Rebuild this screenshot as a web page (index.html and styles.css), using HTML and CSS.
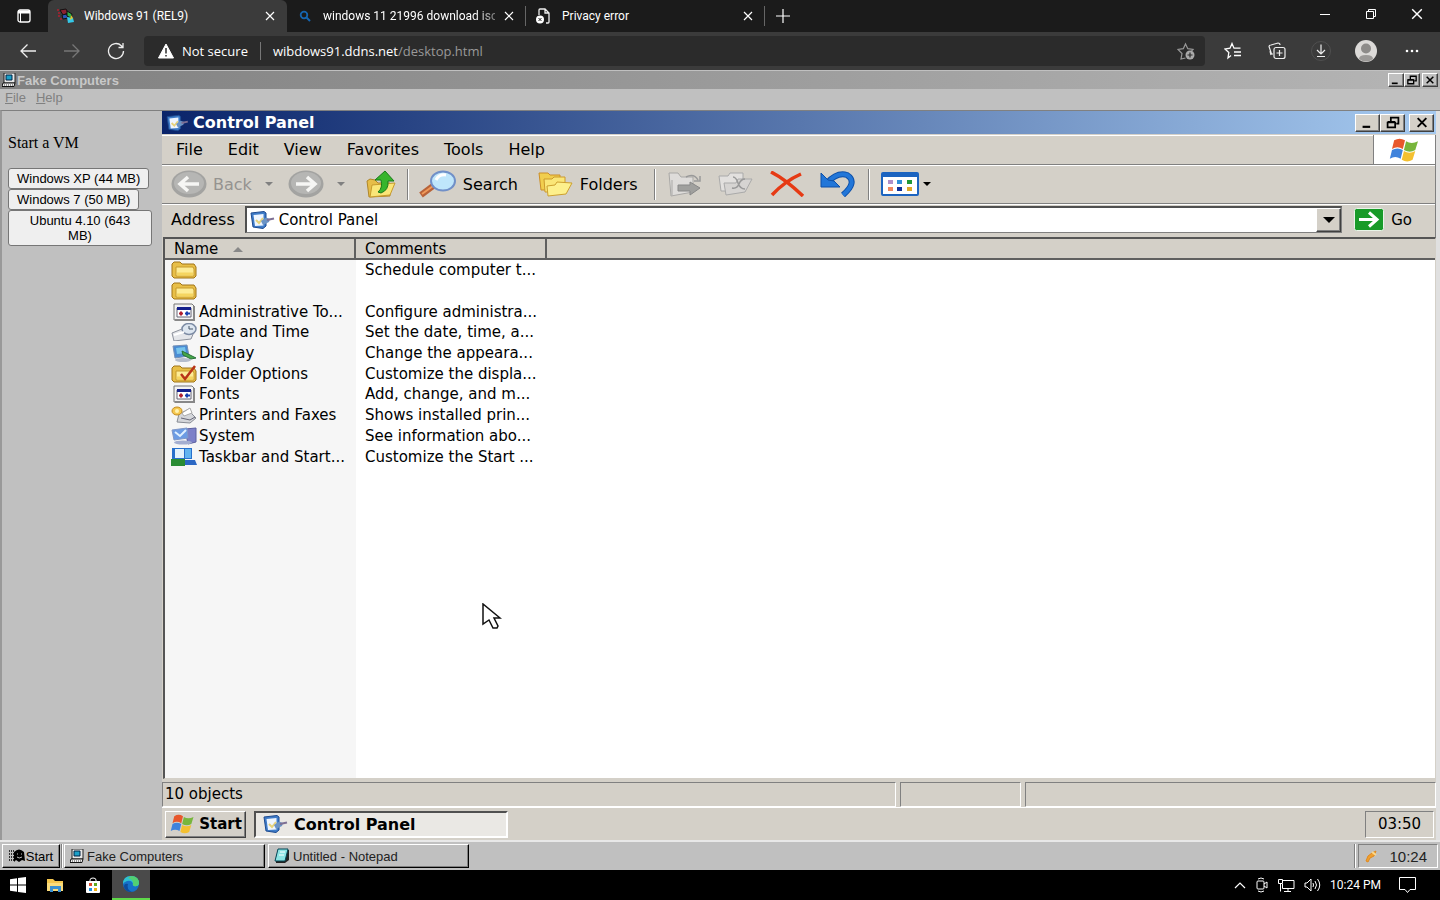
FILE: index.html
```html
<!DOCTYPE html>
<html lang="en">
<head>
  <meta charset="UTF-8">
  <meta name="viewport" content="width=device-width, initial-scale=1.0">
  <title>Wibdows 91 (REL9)</title>
  <link rel="stylesheet" href="styles.css">
</head>
<body>
  <!-- Shared icons -->
  <svg class="defs" width="0" height="0" aria-hidden="true">
    <symbol id="i-close" viewBox="0 0 10 10"><path d="M1 1l8 8M9 1l-8 8" fill="none" stroke="currentColor" stroke-width="1.2"/></symbol>
    <symbol id="i-pc" viewBox="0 0 14 14">
      <path d="M2 0h11v10H2z" fill="#e8e8e8" stroke="#222"/><path d="M4 2h6v5H4z" fill="#1ba0c8" stroke="#024"/>
      <path d="M1 10h12l-1 3.5H0z" fill="#f4f4f4" stroke="#111"/><path d="M2 12h9" stroke="#333" stroke-dasharray="1 1"/>
    </symbol>
    <symbol id="i-panel" viewBox="0 0 26 20">
      <path d="M2 3l13-1.500 2 1.500v13l-3 2.500L4 17z" fill="#3f7cc8" stroke="#1d4a90"/>
      <path d="M4.500 5l10-1v11.500l-8.500.5z" fill="#eef5ff"/>
      <path d="M7 10l3 3 4-5" fill="none" stroke="#e6d27a" stroke-width="2"/>
      <path d="M12 11l5-3.500 4 1.500-1 3-6 3z" fill="#6b93c4"/><path d="M18 10l7-1.500" stroke="#7d6f94" stroke-width="2"/>
    </symbol>
    <symbol id="i-flag" viewBox="0 0 32 24">
      <path d="M6 3q5-3 10 0l-2 8q-5-3-10 0z" fill="#e8582c"/><path d="M17 4q5 3 11 0l-2.500 8q-5 3-10.500 0z" fill="#78b63c"/>
      <path d="M4 12q5-3 10 0l-2 8q-5-3-10 0z" fill="#3f83dc"/><path d="M15 13q5 3 10.500 0l-2.500 8q-5 3-10 0z" fill="#f4c030"/>
    </symbol>
    <symbol id="i-folder" viewBox="0 0 26 18">
      <path d="M1 3l2-2h6l2 2h12l2 3v9l-2 2H3l-2-2z" fill="#e8bf48" stroke="#a07418"/>
      <path d="M5 6h17l1 2v7H5z" fill="#fdec96" stroke="#c79a2c"/><path d="M6 13h16" stroke="#f5d560" stroke-width="3"/>
    </symbol>
    <symbol id="i-fontfile" viewBox="0 0 26 18">
      <path d="M3 1h18l2 2v14H3z" fill="#f2f2f2" stroke="#777"/><path d="M23 3v14H4" fill="none" stroke="#888" stroke-width="2"/>
      <path d="M6 5h14v9H6z" fill="#fff" stroke="#667"/><path d="M6 4h14v3H6z" fill="#14208c"/>
      <path d="M8 10.500h4M10 8.500v4" stroke="#b02030" stroke-width="2"/><path d="M14 10.500h5M16 8.500v4" stroke="#1840b0" stroke-width="2"/>
    </symbol>
    <symbol id="i-min" viewBox="0 0 14 12"><path d="M2 10h7" stroke="#000" stroke-width="2"/></symbol>
    <symbol id="i-restore" viewBox="0 0 14 12"><path d="M5 5V1.500h7V7h-2M5 1.500h7M2 6h7v4.500H2zM2 5.500h7" fill="none" stroke="#000" stroke-width="1.600"/></symbol>
    <symbol id="i-x" viewBox="0 0 14 12"><path d="M3 2l8 8M11 2l-8 8" stroke="#000" stroke-width="1.800"/></symbol>
    <symbol id="i-down" viewBox="0 0 10 5"><path d="M0 0h10L5 5z" fill="currentColor"/></symbol>
  </svg>

  <!-- Browser tabs -->
  <header class="tabs">
    <button class="tab-actions" aria-label="Tab actions">
      <svg width="14" height="14" viewBox="0 0 14 14"><rect x="1" y="1" width="12" height="12" rx="2" fill="none" stroke="#fff" stroke-width="1.300"/><path d="M1 3h12" stroke="#fff" stroke-width="3"/><path d="M3.500 4v9" stroke="#fff"/></svg>
    </button>
    <div class="tab active">
      <svg width="18" height="16" viewBox="0 0 18 16"><path d="M0 2h3M1 5h3M1 8h3M3 11h2" stroke="#b02030" stroke-width="1.500" stroke-dasharray="2 1"/><path d="M3 2l6-1 2 4-5 2z" fill="#8c2030" stroke="#111"/><path d="M5 7l5-1 1 4-5 1z" fill="#2858b8" stroke="#111"/><path d="M10 3l5 3-1 4-4-2z" fill="#30b048" stroke="#111"/><path d="M10 9l6 1 1 4-6 1z" fill="#35c8e8"/><path d="M14 7l2 3-3 2z" fill="#e0c830"/></svg>
      <span class="tab-title">Wibdows 91 (REL9)</span>
      <button class="tab-close" aria-label="Close tab"><svg width="10" height="10"><use href="#i-close"/></svg></button>
    </div>
    <div class="tab">
      <svg width="18" height="16" viewBox="0 0 18 16"><circle cx="8" cy="7" r="3.300" fill="none" stroke="#1565b0" stroke-width="1.800"/><path d="M10.500 9.500l3.500 3.500" stroke="#1565b0" stroke-width="2"/></svg>
      <span class="tab-title fade">windows 11 21996 download iso</span>
      <button class="tab-close" aria-label="Close tab"><svg width="10" height="10"><use href="#i-close"/></svg></button>
    </div>
    <div class="tab">
      <svg width="18" height="16" viewBox="0 0 18 16"><path d="M4 7V2q0-1 1-1h5l4 4v9q0 1-1 1h-2M10 1v4h4" fill="none" stroke="#eee" stroke-width="1.300"/><circle cx="5" cy="11.500" r="4" fill="#fff"/><path d="M3.500 10l3 3M6.500 10l-3 3" stroke="#222"/></svg>
      <span class="tab-title">Privacy error</span>
      <button class="tab-close" aria-label="Close tab"><svg width="10" height="10"><use href="#i-close"/></svg></button>
    </div>
    <button class="new-tab" aria-label="New tab"><svg width="14" height="14" viewBox="0 0 14 14"><path d="M7 0v14M0 7h14" stroke="#fff" stroke-width="1.200"/></svg></button>
    <div class="window-controls">
      <button aria-label="Minimize"><svg width="10" height="10"><path d="M0 5.500h10" stroke="#fff"/></svg></button>
      <button aria-label="Restore"><svg width="10" height="10" viewBox="0 0 10 10"><path d="M.5 2.500h7v7h-7zM2.500 2.500v-2h7v7h-2" fill="none" stroke="#fff"/></svg></button>
      <button aria-label="Close"><svg width="12" height="12"><use href="#i-close"/></svg></button>
    </div>
  </header>

  <!-- Browser toolbar -->
  <div class="browser-bar">
    <button aria-label="Back"><svg width="18" height="16" viewBox="0 0 18 16"><path d="M17 8H2M8.500 1.500L2 8l6.500 6.500" fill="none" stroke="#eee" stroke-width="1.300"/></svg></button>
    <button aria-label="Forward"><svg width="18" height="16" viewBox="0 0 18 16"><path d="M1 8h15M9.500 1.500L16 8l-6.500 6.500" fill="none" stroke="#777" stroke-width="1.300"/></svg></button>
    <button aria-label="Refresh"><svg width="18" height="18" viewBox="0 0 18 18"><path d="M16.500 9A7.500 7.500 0 1 1 14.300 3.700L16 5.500M16 1v4.500h-4.500" fill="none" stroke="#eee" stroke-width="1.300"/></svg></button>
    <div class="omnibox">
      <svg width="18" height="16" viewBox="0 0 18 16"><path d="M9 1l7.500 14h-15z" fill="#fff" stroke="#fff" stroke-linejoin="round"/><path d="M9 5v5.500M9 12v1.500" stroke="#2b2b2b" stroke-width="1.500"/></svg>
      <span class="not-secure">Not secure</span>
      <a class="url" href="#">wibdows91.ddns.net<span>/desktop.html</span></a>
      <button aria-label="Add to favorites"><svg width="18" height="18" viewBox="0 0 18 18"><path d="M8.500 16L4 17l1-5.500L1 7.500l5.300-.8L8.500 2l2.300 4.700 5.200.8-1.500 1.500" fill="none" stroke="#999" stroke-width="1.200"/><circle cx="13" cy="13" r="4.500" fill="#aaa"/><path d="M13 10.500v5M10.500 13h5" stroke="#2b2b2b" stroke-width="1.200"/></svg></button>
    </div>
    <button aria-label="Favorites"><svg width="18" height="18" viewBox="0 0 18 18"><path d="M7 13.500L4 16l.8-5.500L1 7l5-.8L8 1.500l2 4.700h6.500M10 10h7M10 13.500h7" fill="none" stroke="#fff" stroke-width="1.300"/></svg></button>
    <button aria-label="Collections"><svg width="18" height="18" viewBox="0 0 18 18"><path d="M5 12H3.500L1 4.500Q1 3 3 3l7-2q2 0 2 2M3 13l-1-4" fill="none" stroke="#eee" stroke-width="1.200"/><rect x="6" y="5.500" width="11" height="11" rx="2" fill="#3b3b3b" stroke="#eee" stroke-width="1.200"/><path d="M11.500 8v6M8.500 11h6" stroke="#eee" stroke-width="1.200"/></svg></button>
    <button aria-label="Downloads"><svg width="20" height="20" viewBox="0 0 20 20"><circle cx="10" cy="10" r="9.500" fill="none" stroke="#505050"/><path d="M10 3.500v9M6 9l4 4 4-4M6 15.500h8" fill="none" stroke="#eee" stroke-width="1.200"/></svg></button>
    <button class="wide" aria-label="Profile"><svg width="22" height="22" viewBox="0 0 22 22"><circle cx="11" cy="11" r="11" fill="#dcdad8"/><circle cx="11" cy="8.500" r="5" fill="#8d8b89"/><path d="M4 19q0-4 7-4t7 4q-7 5-14 0z" fill="#9b9997"/></svg></button>
    <button class="wide" aria-label="Settings and more"><svg width="14" height="4" viewBox="0 0 14 4"><circle cx="2" cy="2" r="1.300" fill="#fff"/><circle cx="7" cy="2" r="1.300" fill="#fff"/><circle cx="12" cy="2" r="1.300" fill="#fff"/></svg></button>
  </div>

  <!-- Wibdows 91 desktop -->
  <main class="desktop">
    <div class="app-title">
      <svg width="14" height="14"><use href="#i-pc"/></svg>
      <span>Fake Computers</span>
      <div class="win-buttons small">
        <button aria-label="Minimize"><svg width="12" height="10"><use href="#i-min"/></svg></button>
        <button aria-label="Restore"><svg width="12" height="10"><use href="#i-restore"/></svg></button>
        <button aria-label="Close"><svg width="12" height="10"><use href="#i-x"/></svg></button>
      </div>
    </div>
    <nav class="app-menu"><a href="#"><u>F</u>ile</a><a href="#"><u>H</u>elp</a></nav>

    <div class="app-body">
      <aside class="sidebar">
        <p>Start a VM</p>
        <button>Windows XP (44 MB)</button>
        <button>Windows 7 (50 MB)</button>
        <button>Ubuntu 4.10 (643 MB)</button>
      </aside>

      <section class="vm">
        <div class="vm-title">
          <svg width="24" height="18"><use href="#i-panel"/></svg>
          <h1>Control Panel</h1>
          <div class="win-buttons">
            <button aria-label="Minimize"><svg width="16" height="13"><use href="#i-min"/></svg></button>
            <button aria-label="Restore"><svg width="16" height="13"><use href="#i-restore"/></svg></button>
            <button aria-label="Close"><svg width="16" height="13"><use href="#i-x"/></svg></button>
          </div>
        </div>

        <div class="explorer">
          <nav class="vm-menu">
            <a href="#">File</a><a href="#">Edit</a><a href="#">View</a><a href="#">Favorites</a><a href="#">Tools</a><a href="#">Help</a>
            <span class="brand"><svg width="36" height="26"><use href="#i-flag"/></svg></span>
          </nav>

          <div class="toolbar">
            <button class="back" disabled>
              <svg width="36" height="28" viewBox="0 0 36 28"><ellipse cx="18" cy="14" rx="17.500" ry="13.500" fill="#a3a3a1"/><ellipse cx="18" cy="13" rx="15" ry="11" fill="#b6b6b4"/><path d="M28 14H10M17 7l-8 7 8 7" fill="none" stroke="#f6f6f4" stroke-width="3.500"/></svg>
              Back
            </button>
            <svg class="arrow" width="8" height="4"><use href="#i-down"/></svg>
            <button class="forward" disabled aria-label="Forward">
              <svg width="36" height="28" viewBox="0 0 36 28"><ellipse cx="18" cy="14" rx="17.500" ry="13.500" fill="#a3a3a1"/><ellipse cx="18" cy="13" rx="15" ry="11" fill="#b6b6b4"/><path d="M8 14h18M19 7l8 7-8 7" fill="none" stroke="#f6f6f4" stroke-width="3.500"/></svg>
            </button>
            <svg class="arrow" width="8" height="4"><use href="#i-down"/></svg>
            <button class="up" aria-label="Up">
              <svg width="32" height="28" viewBox="0 0 32 28"><path d="M2 11l3-2 5 1 3 3h12v13l-21 1z" fill="#e6bd48" stroke="#b0862a"/><path d="M7 15l23-2-5 12-20 2z" fill="#fae678" stroke="#c79a2c"/><path d="M16 23q8-3 7-12h6L20 1 10 10h6q2 8-3 12z" fill="#37b52c" stroke="#1a7a18"/></svg>
            </button>
            <span class="divider"></span>
            <button class="search">
              <svg width="38" height="28" viewBox="0 0 38 28"><path d="M2 25l12-9" stroke="#b86238" stroke-width="6"/><path d="M3 24l11-8" stroke="#f09a5a" stroke-width="2"/><ellipse cx="24" cy="11" rx="12" ry="9.500" fill="#bfe6fb" stroke="#7190c8" stroke-width="2"/><path d="M17 10q3-6 10-5" fill="none" stroke="#fff" stroke-width="3"/></svg>
              Search
            </button>
            <button class="folders">
              <svg width="36" height="26" viewBox="0 0 36 26"><path d="M1 2h9l2 2h10v15H3z" fill="#f1ce4e" stroke="#cc8f28"/><path d="M6 8h8l2-2h11v15H7z" fill="#fae678" stroke="#cc9a2c"/><path d="M9 15l8-1 2-3 15 1-6 11-18 2z" fill="#fdf08c" stroke="#cda030"/></svg>
              Folders
            </button>
            <span class="divider"></span>
            <button disabled aria-label="Move to">
              <svg width="36" height="26" viewBox="0 0 36 26"><path d="M2 2h9l3 4h12v15l-22 4zM5 24V9" fill="#dedcda" stroke="#a9a8a6"/><path d="M19 6q8-4 12 3M33 5v5h-6" fill="none" stroke="#999" stroke-width="1.500"/><path d="M11 14h12v-3l10 6-10 7v-4H11z" fill="#a0a09e" stroke="#888"/></svg>
            </button>
            <button disabled aria-label="Copy to">
              <svg width="36" height="26" viewBox="0 0 36 26"><path d="M1 5h9l2-3h13v18H3z" fill="#e2e0de" stroke="#aaa"/><path d="M6 12h12l2-4h14l-7 13-19 3z" fill="#d6d4d2" stroke="#aaa"/><path d="M15 6q3 0 5 6t7 6M14 17q5 1 7-4t6-5" fill="none" stroke="#999" stroke-width="1.500"/></svg>
            </button>
            <button class="delete" aria-label="Delete">
              <svg width="36" height="26" viewBox="0 0 36 26"><path d="M2 1Q16 8 34 25M32 3Q16 10 3 24" fill="none" stroke="#e63a14" stroke-width="3.500"/></svg>
            </button>
            <button class="undo" aria-label="Undo">
              <svg width="36" height="26" viewBox="0 0 36 26"><path d="M7 12Q17 1 27 4q11 7-4 20" fill="none" stroke="#0d4fa8" stroke-width="6"/><path d="M7 12Q17 1 27 4q11 7-4 20" fill="none" stroke="#2276d8" stroke-width="4"/><path d="M1 2v14h19l-6-6-6-1z" fill="#2276d8" stroke="#0d4fa8"/></svg>
            </button>
            <span class="divider"></span>
            <button class="views" aria-label="Views">
              <svg width="38" height="24" viewBox="0 0 38 24"><rect x="1" y="1" width="36" height="22" rx="1" fill="#fff" stroke="#1c64c0" stroke-width="2"/><path d="M1 3h36" stroke="#1c64c0" stroke-width="4"/><path d="M7 8h5v4H7z" fill="#b090c8"/><path d="M16 8h5v4h-5z" fill="#3090d8"/><path d="M26 8h5v4h-5z" fill="#209838"/><path d="M7 15h5v4H7z" fill="#f08860"/><path d="M16 15h5v4h-5z" fill="#103098"/><path d="M26 15h5v4h-5z" fill="#e0a828"/></svg>
              <svg width="8" height="4"><use href="#i-down"/></svg>
            </button>
          </div>

          <form class="address">
            <label for="address">Address</label>
            <div class="address-box">
              <svg width="26" height="20"><use href="#i-panel"/></svg>
              <input id="address" type="text" value="Control Panel">
              <button type="button" aria-label="Show addresses"><svg width="12" height="6"><use href="#i-down"/></svg></button>
            </div>
            <button class="go" type="button">
              <svg width="30" height="23" viewBox="0 0 30 23"><rect x=".5" y=".5" width="29" height="22" rx="2" fill="#189a28" stroke="#e8f4e8"/><path d="M5 11.500h18M15 4.500l8 7-8 7" fill="none" stroke="#fff" stroke-width="3"/></svg>
              Go
            </button>
          </form>

          <div class="files">
            <table>
              <thead>
                <tr><th class="col">Name <svg width="10" height="5" viewBox="0 0 10 5"><path d="M5 0l5 5H0z" fill="#888"/></svg></th><th class="col">Comments</th><th></th></tr>
              </thead>
              <tbody>
                <tr><td><svg width="26" height="18"><use href="#i-folder"/></svg></td><td>Schedule computer t...</td><td></td></tr>
                <tr><td><svg width="26" height="18"><use href="#i-folder"/></svg></td><td></td><td></td></tr>
                <tr><td><svg width="26" height="18"><use href="#i-fontfile"/></svg>Administrative To...</td><td>Configure administra...</td><td></td></tr>
                <tr><td><svg width="26" height="18" viewBox="0 0 26 18"><path d="M1 10l10-4 12 3-3 7-17 2z" fill="#e4e6ea" stroke="#8c919c"/><ellipse cx="18" cy="6" rx="7" ry="5.500" fill="#dde6f0" stroke="#7c8ba4" stroke-width="1.500"/><path d="M18 3v3h4" fill="none" stroke="#456"/><path d="M3 12l10-3" stroke="#fff" stroke-width="2"/></svg>Date and Time</td><td>Set the date, time, a...</td><td></td></tr>
                <tr><td><svg width="26" height="18" viewBox="0 0 26 18"><path d="M2 2l14-1 2 11-14 2z" fill="#4a8cd4" stroke="#7790b4"/><path d="M5 4l9-1 1 6-9 1z" fill="#78c4ec"/><ellipse cx="12" cy="16" rx="8" ry="2" fill="#b4bccc"/><path d="M11 7l14 7-5 1-8-4z" fill="#46a848" stroke="#287038"/></svg>Display</td><td>Change the appeara...</td><td></td></tr>
                <tr><td><svg width="26" height="18" viewBox="0 0 26 18"><use href="#i-folder"/><path d="M10 9l4 5 10-13" fill="none" stroke="#b83418" stroke-width="2.500"/></svg>Folder Options</td><td>Customize the displa...</td><td></td></tr>
                <tr><td><svg width="26" height="18"><use href="#i-fontfile"/></svg>Fonts</td><td>Add, change, and m...</td><td></td></tr>
                <tr><td><svg width="26" height="18" viewBox="0 0 26 18"><path d="M8 8l10-5 3 5 4 4-6 5-13-1z" fill="#d4d6da" stroke="#888c94"/><path d="M11 7l8-5 2 5-8 3z" fill="#fff" stroke="#aaa"/><path d="M10 12l9 2 5-3" fill="none" stroke="#667"/><ellipse cx="6" cy="5" rx="5" ry="4" fill="#f6c850" stroke="#c48c20"/><circle cx="6" cy="5" r="2" fill="#fff3b0"/></svg>Printers and Faxes</td><td>Shows installed prin...</td><td></td></tr>
                <tr><td><svg width="26" height="18" viewBox="0 0 26 18"><path d="M14 2l11-1v14l-8 2z" fill="#7c80c8" stroke="#5c60a0"/><path d="M1 3l15-2 1 10-14 2z" fill="#6c9ce4" stroke="#8098c8"/><path d="M4 5l5 4 6-6" fill="none" stroke="#e0f0ff" stroke-width="2"/><ellipse cx="12" cy="15.500" rx="9" ry="2" fill="#a4aed0"/></svg>System</td><td>See information abo...</td><td></td></tr>
                <tr><td><svg width="26" height="18" viewBox="0 0 26 18"><path d="M1 0h20v11H1z" fill="#2870cc"/><path d="M4 1h9v9H4z" fill="#e4f2fc"/><path d="M14 1h6v9h-6z" fill="#62b4f0"/><path d="M0 11h14v7H0z" fill="#2a8c34"/><path d="M14 12h10l2 5H14z" fill="#2c68c4"/></svg>Taskbar and Start...</td><td>Customize the Start ...</td><td></td></tr>
              </tbody>
            </table>
            <svg class="cursor" width="20" height="28" viewBox="0 0 20 28"><path d="M1 1v20l6-4 4 8h4l1-2-4-8h6z" fill="#fff" stroke="#111" stroke-width="1.500"/></svg>
          </div>

          <div class="status"><span>10 objects</span><span></span><span></span></div>
        </div>

        <div class="vm-taskbar">
          <button class="vm-start"><svg width="28" height="22"><use href="#i-flag"/></svg>Start</button>
          <button class="vm-task"><svg width="26" height="20"><use href="#i-panel"/></svg>Control Panel</button>
          <time>03:50</time>
        </div>
      </section>
    </div>

    <footer class="taskbar">
      <button class="start"><svg width="17" height="14" viewBox="0 0 17 14"><path d="M0 2h5M0 5h5M0 8h5M0 11h5" stroke="#000" stroke-width="1.500" stroke-dasharray="1 1"/><path d="M5 3q5-5 10 0l1 9-3-1-3 2-3-2-2 2z"/><path d="M8 5h1M12 5h1M8 8q2 2 5 0" fill="none" stroke="#c0c0c0"/></svg>Start</button>
      <span class="grip"></span>
      <button class="task"><svg width="14" height="14"><use href="#i-pc"/></svg>Fake Computers</button>
      <button class="task"><svg width="16" height="16" viewBox="0 0 16 16"><path d="M5 2h10v10l-4 3H2V9z" fill="#222"/><path d="M4 1h10l-3 12H1z" fill="#8ce4e4" stroke="#045"/><path d="M6 4h5M5 7h5" stroke="#fff"/></svg>Untitled - Notepad</button>
      <span class="grip tray-grip"></span>
      <div class="tray"><svg width="14" height="14" viewBox="0 0 14 14"><path d="M2 12l2-5 4-3 4-2-2 5-4 2-2 4z" fill="#f0a030" stroke="#e08a20"/><path d="M8 3l4 3" stroke="#f8d890" stroke-width="2"/></svg><time>10:24</time></div>
    </footer>
  </main>

  <!-- Host taskbar -->
  <footer class="host-bar">
    <button aria-label="Start"><svg width="16" height="16" viewBox="0 0 16 16"><path d="M0 2.300L7 1.300V7.500H0zM8 1.100L16 0v7.500H8zM0 8.500h7v6.200l-7-1zM8 8.500h8V16l-8-1.100z" fill="#fff"/></svg></button>
    <button aria-label="File Explorer"><svg width="17" height="15" viewBox="0 0 17 15"><path d="M0 1h6l2 2h8v10H0z" fill="#f4c64e"/><path d="M0 5h16v8H0z" fill="#fbdc7c"/><path d="M3 8h11v6h-3v-3H6v3H3z" fill="#3a90d0"/></svg></button>
    <button aria-label="Store"><svg width="16" height="16" viewBox="0 0 16 16"><path d="M5 5V3q0-2 3-2t3 2v2" fill="none" stroke="#fff"/><path d="M1 4h14v11q0 1-1 1H2q-1 0-1-1z" fill="#fff"/><path d="M4 6h3v3H4z" fill="#e04828"/><path d="M9 6h3v3H9z" fill="#60a820"/><path d="M4 11h3v3H4z" fill="#2090e0"/><path d="M9 11h3v3H9z" fill="#f0b010"/></svg></button>
    <button class="running" aria-label="Microsoft Edge"><svg width="18" height="18" viewBox="0 0 18 18"><circle cx="9" cy="9" r="8" fill="#1671c8"/><path d="M1 9Q1 1 9 1t8 8q-1 3-5 2-2-1-1-2-1-4-6-3-3 1-4 3z" fill="#2fc0d0"/><path d="M10 1q7 1 7 7-1 4-5 3-2-1-1-2Q12 5 6 3q2-2 4-2z" fill="#52cf72"/><path d="M6 9q-2 5 4 8-7 0-8-5 0-4 4-3z" fill="#0d4c9c"/></svg></button>
    <div class="host-tray">
      <svg width="12" height="8" viewBox="0 0 12 8"><path d="M1 7l5-5 5 5" fill="none" stroke="#fff" stroke-width="1.200"/></svg>
      <svg width="14" height="16" viewBox="0 0 14 16"><rect x="2" y="4" width="7" height="8" rx="1" fill="none" stroke="#fff"/><path d="M9 7l3-2v6l-3-2M3 2q3-2 6 0M3 14q3 2 6 0" fill="none" stroke="#fff"/></svg>
      <svg width="17" height="14" viewBox="0 0 17 14"><path d="M5 2.500h11v8H4.500V6M10 11v2.500M6 13.500h7M.5 1.500h4v4h-4zM2.500 5.500v8" fill="none" stroke="#fff"/></svg>
      <svg width="17" height="14" viewBox="0 0 17 14"><path d="M1 5h2l4-4v12L3 9H1zM9 5q1 2 0 4M11 3q3 4 0 8M13.500 1q4.500 6 0 12" fill="none" stroke="#fff"/></svg>
      <time>10:24 PM</time>
      <svg width="17" height="16" viewBox="0 0 17 16"><path d="M.5.500h16v12H11l-2.500 3-2.500-3H.5z" fill="none" stroke="#fff"/></svg>
    </div>
  </footer>
</body>
</html>
```
FILE: styles.css
```css
* {
  box-sizing: border-box;
}

body {
  margin: 0;
  height: 100vh;
  display: flex;
  flex-direction: column;
  overflow: hidden;
  background: #c0c0c0;
  font-family: "Liberation Sans", Arial, sans-serif;
  font-size: 13px;
  color: #000;
}

button {
  margin: 0;
  padding: 0;
  border: none;
  background: none;
  font: inherit;
  color: inherit;
  display: flex;
  align-items: center;
  justify-content: center;
}

a {
  color: inherit;
  text-decoration: none;
}

svg {
  display: block;
  flex: none;
}

.defs {
  position: absolute;
}

/* Browser tabs */
.tabs {
  display: flex;
  height: 32px;
  flex: none;
  background: #1b1b1b;
  color: #fff;
  font: 12px Roboto, sans-serif;
}

.tab-actions {
  width: 48px;
}

.tab {
  width: 239px;
  display: flex;
  align-items: center;
  gap: 9px;
  padding: 0 12px 0 9px;
}

.tab:not(.active) {
  background: linear-gradient(#666, #666) right center / 1px 20px no-repeat;
}

.tab.active {
  background: #3b3b3b;
  border-radius: 6px 6px 0 0;
}

.tab-title {
  flex: 1;
  white-space: nowrap;
  overflow: hidden;
}

.tab-title.fade {
  mask-image: linear-gradient(90deg, #000 88%, #0006);
}

.new-tab {
  width: 36px;
}

.window-controls {
  display: flex;
  margin-left: auto;
}

.window-controls button {
  width: 46px;
  height: 28px;
}

/* Browser toolbar */
.browser-bar {
  display: flex;
  align-items: center;
  height: 38px;
  flex: none;
  background: #3b3b3b;
  color: #fff;
  padding: 0 5px 0 6px;
  font: 13px "Open Sans", sans-serif;
}

.browser-bar > button {
  width: 44px;
  height: 32px;
}

.browser-bar > .wide {
  width: 46px;
}

.omnibox {
  flex: 1;
  display: flex;
  align-items: center;
  height: 30px;
  margin: 0 6px;
  padding: 0 10px 0 13px;
  background: #2b2b2b;
  border-radius: 4px;
}

.not-secure {
  margin-left: 7px;
  padding-right: 12px;
  border-right: 1px solid #777;
  line-height: 18px;
}

.url {
  margin: 0 auto 0 12px;
}

.url span {
  color: #999;
}

/* Fake Computers window */
.desktop {
  flex: 1;
  min-height: 0;
  display: flex;
  flex-direction: column;
  border-top: 1px solid #c0c0c0;
}

.app-title {
  display: flex;
  align-items: center;
  gap: 1px;
  height: 18px;
  flex: none;
  padding: 0 2px;
  background: linear-gradient(90deg, #808080, #b5b5b5);
  color: #c8c8c8;
  font-weight: bold;
}

.win-buttons {
  display: flex;
  margin-left: auto;
}

.win-buttons button {
  width: 25px;
  height: 18px;
  background: #d4d0c8;
  border: 1px solid;
  border-color: #fff #404040 #404040 #fff;
  box-shadow: inset -1px -1px #808080;
}

.win-buttons button:last-child {
  margin-left: 4px;
}

.win-buttons.small button {
  width: 16px;
  height: 14px;
  background: #c0c0c0;
}

.win-buttons.small button:last-child {
  margin-left: 2px;
}

.app-menu {
  display: flex;
  gap: 10px;
  height: 21px;
  flex: none;
  padding: 0 5px;
  line-height: 17px;
  color: #808080;
}

.app-body {
  flex: 1;
  min-height: 0;
  display: flex;
  border-top: 1px solid #808080;
  border-left: 2px solid #999;
}

.sidebar {
  width: 160px;
  flex: none;
  display: flex;
  flex-direction: column;
  align-items: flex-start;
  padding: 7px 10px 7px 6px;
}

.sidebar p {
  margin: 16px 0;
  font: 16px/18px "Liberation Serif", "Times New Roman", serif;
}

.sidebar button {
  padding: 2px 8px;
  border: 1px solid #767676;
  border-radius: 3px;
  background: #efefef;
  line-height: 15px;
}

/* Virtual machine screen */
.vm {
  flex: 1;
  min-width: 0;
  display: flex;
  flex-direction: column;
  background: #d4d0c8;
  border-right: 4px solid #e0e0e0;
  font-family: "DejaVu Sans", Verdana, sans-serif;
  font-size: 15px;
}

.vm-title {
  display: flex;
  align-items: center;
  gap: 4px;
  height: 23px;
  flex: none;
  padding: 0 2px 0 3px;
  background: linear-gradient(90deg, #0a246a, #a6caf0);
}

.vm-title h1 {
  margin: 0;
  font-size: 16px;
  line-height: 20px;
  color: #fff;
}

.explorer {
  flex: 1;
  min-height: 0;
  display: flex;
  flex-direction: column;
}

.vm-menu,
.toolbar,
.address label {
  font-size: 16px;
}

.vm-menu {
  display: flex;
  align-items: center;
  gap: 25px;
  height: 30px;
  flex: none;
  margin-top: 1px;
  padding-left: 14px;
  border: solid #808080;
  border-width: 0 1px 1px 0;
  box-shadow: inset 0 1px #fff;
}

.brand {
  align-self: stretch;
  display: flex;
  align-items: center;
  justify-content: center;
  width: 62px;
  margin-left: auto;
  background: #fff;
  border-left: 1px solid #808080;
}

.toolbar {
  display: flex;
  align-items: center;
  height: 39px;
  flex: none;
  padding-left: 9px;
  border: solid #808080;
  border-width: 0 1px 1px 0;
  box-shadow: inset 0 1px #fff;
}

.toolbar button {
  gap: 6px;
  margin-right: 15px;
}

.toolbar .search {
  margin: 0 20px 0 7px;
}

.toolbar .back,
.toolbar .forward {
  color: #959390;
  margin-right: 13px;
}

.toolbar .arrow {
  color: #808080;
  margin-right: 15px;
}

.toolbar .up {
  margin-left: 5px;
  margin-right: 10px;
}

.toolbar .folders {
  margin-right: 16px;
}

.toolbar .undo {
  margin-right: 12px;
}

.toolbar .views {
  gap: 4px;
}

.divider {
  width: 2px;
  height: 31px;
  margin-right: 11px;
  border-left: 1px solid #808080;
  border-right: 1px solid #fff;
}

.up + .divider {
  margin-right: 3px;
}

.address {
  display: flex;
  align-items: center;
  height: 33px;
  flex: none;
  padding: 0 0 2px 9px;
  border-right: 1px solid #808080;
  box-shadow: inset 0 1px #fff;
}

.address-box {
  flex: 1;
  display: flex;
  align-items: center;
  height: 27px;
  margin: 0 12px 0 10px;
  padding-left: 2px;
  background: #fff;
  border: 1px solid #808080;
  border-top: 2px solid #505050;
  border-left: 2px solid #505050;
}

.address-box input {
  flex: 1;
  min-width: 0;
  padding: 0 4px;
  border: none;
  background: none;
  font: inherit;
}

.address-box button {
  width: 25px;
  height: 24px;
  background: #d4d0c8;
  border: 1px solid;
  border-color: #fff #404040 #404040 #fff;
  box-shadow: inset -1px -1px #808080;
}

.go {
  gap: 7px;
  margin-right: 23px;
}

.files {
  position: relative;
  flex: 1;
  min-height: 0;
  margin-left: 1px;
  overflow: hidden;
  border: 2px solid #555;
  border-right: 1px solid #d4d0c8;
  border-bottom: 1px solid #d4d0c8;
  background: linear-gradient(90deg, #f6f6f6 191px, #fff 191px);
}

.files table {
  width: 100%;
  height: 228px;
  table-layout: fixed;
  border-collapse: separate;
  border-spacing: 0;
}

.files th {
  height: 21px;
  padding: 0 9px;
  background: #d4d0c8;
  border-bottom: 2px solid #606060;
  text-align: left;
  font-weight: normal;
  line-height: 18px;
}

.files th.col {
  width: 191px;
  border-right: 2px solid #606060;
}

.files th svg {
  display: inline-block;
  margin-left: 10px;
  vertical-align: middle;
}

.files td {
  padding: 0 9px;
  line-height: 18px;
  white-space: nowrap;
}

.files td:first-child {
  padding: 0 0 0 6px;
}

.files td svg {
  display: inline-block;
  margin-right: 2px;
  vertical-align: top;
}

.cursor {
  position: absolute;
  left: 317px;
  top: 364px;
}

.status {
  display: grid;
  grid-template-columns: 734px 121px 1fr;
  gap: 4px;
  height: 25px;
  flex: none;
  margin-top: 3px;
}

.status span {
  padding-left: 2px;
  line-height: 22px;
  border: 1px solid;
  border-color: #808080 #fff #fff #808080;
}

.vm-taskbar {
  display: flex;
  align-items: center;
  gap: 8px;
  height: 33px;
  flex: none;
  padding: 0 2px 0 3px;
  border-top: 1px solid #fff;
}

.vm-start,
.vm-task {
  height: 27px;
  font-weight: bold;
  border: 1px solid;
}

.vm-start {
  width: 81px;
  gap: 2px;
  border-color: #fff #404040 #404040 #fff;
  box-shadow: inset -1px -1px #808080;
}

.vm-task {
  width: 254px;
  justify-content: flex-start;
  gap: 6px;
  padding-left: 6px;
  background: #eae8e4;
  border: 2px solid;
  border-color: #505050 #fff #fff #505050;
  font-size: 16px;
}

.vm-taskbar time {
  margin-left: auto;
  width: 69px;
  line-height: 25px;
  text-align: center;
  border: 1px solid;
  border-color: #808080 #fff #fff #808080;
}

/* Wibdows 91 taskbar */
.taskbar {
  display: flex;
  align-items: center;
  height: 30px;
  flex: none;
  padding: 2px 2px 2px;
  border-top: 2px solid #e8e8e8;
  font-size: 13px;
  color: #222;
}

.taskbar button {
  height: 24px;
  border: 1px solid;
  border-color: #fff #000 #000 #fff;
  box-shadow: inset -1px -1px #808080;
}

.taskbar .start {
  width: 58px;
  color: #000;
}

.grip {
  width: 2px;
  height: 24px;
  margin: 0 1px;
  border-left: 1px solid #808080;
  border-right: 1px solid #fff;
}

.taskbar .task {
  width: 201px;
  justify-content: flex-start;
  gap: 3px;
  margin-right: 3px;
  padding-left: 5px;
}

.taskbar .tray-grip {
  margin: 0 2px 0 auto;
}

.tray {
  display: flex;
  align-items: center;
  justify-content: space-between;
  width: 80px;
  height: 24px;
  padding: 0 10px 0 5px;
  border: 1px solid;
  border-color: #808080 #fff #fff #808080;
  font-size: 15px;
}

/* Host taskbar */
.host-bar {
  display: flex;
  height: 30px;
  flex: none;
  background: #000;
  color: #fff;
  font: 12px Roboto, sans-serif;
}

.host-bar button {
  width: 36px;
}

.host-bar button + button {
  width: 38px;
}

.host-bar .running {
  background: #4a4a4a;
  border-bottom: 2px solid #5fd94a;
}

.host-tray {
  display: flex;
  align-items: center;
  gap: 9px;
  margin-left: auto;
  padding-right: 24px;
}

.host-tray time + svg {
  margin-left: 9px;
}
```
